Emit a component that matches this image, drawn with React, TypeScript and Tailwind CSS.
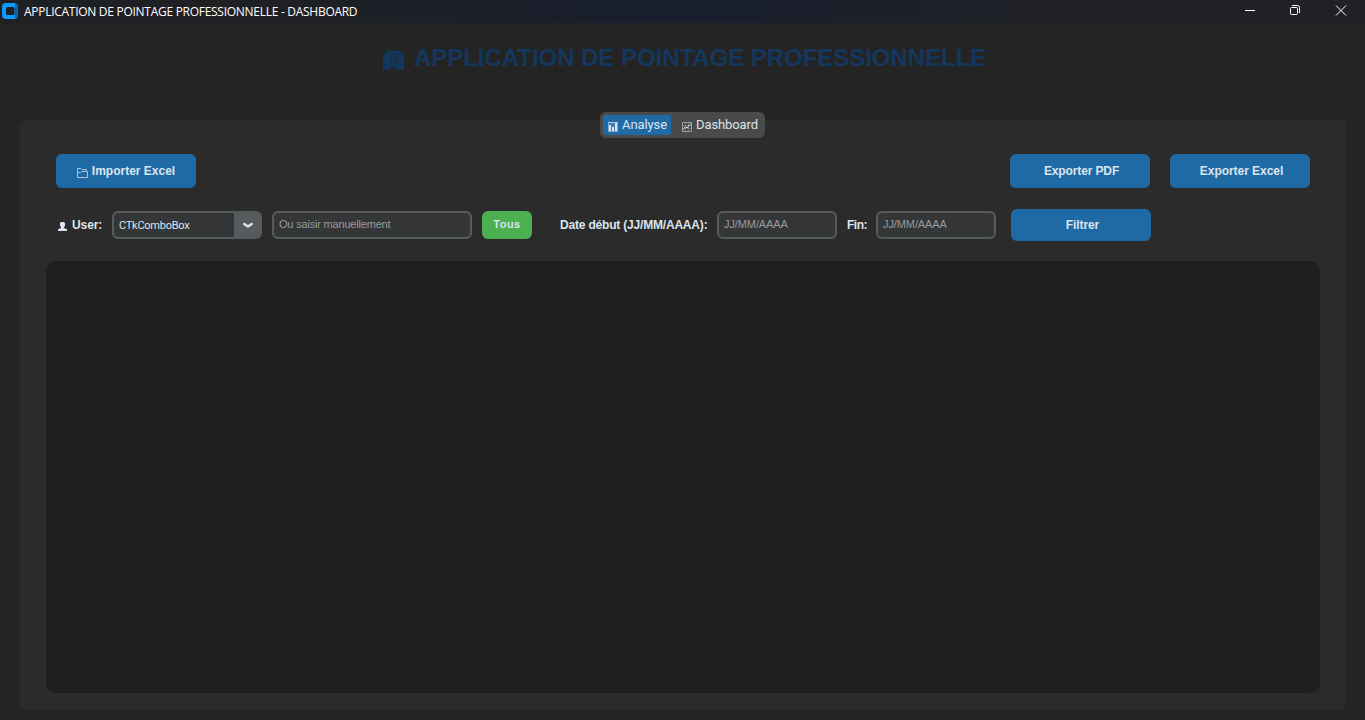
import type { ReactNode } from "react";

const BLUE_BUTTON =
  "flex w-[140px] shrink-0 items-center justify-center rounded-[6px] bg-[#1f6aa5] text-[12px] font-bold text-[#dce4ee]";
const FIELD =
  "flex h-7 shrink-0 rounded-[6px] border-2 border-[#565b5e] bg-[#343638] text-[11px]";

function Logo() {
  return (
    <svg className="ml-0.5 size-4 shrink-0" viewBox="0 0 16 16">
      <rect width="16" height="16" rx="4" fill="#0a9aff" />
      <path d="M13 .200a4 4 0 0 1 3 3.800v8a4 4 0 0 1-3 3.800z" fill="#0a63b0" />
      <rect x="4" y="4" width="8.500" height="8" rx="1.500" fill="#202126" />
    </svg>
  );
}

function BuildingIcon() {
  return (
    <svg className="mt-1 mr-2.5 h-5 w-[21px] shrink-0" viewBox="0 0 21 20">
      <path d="M0 4.500L1 3.500h2V2L5 .5h11L18 2v1.500h2l1 1v15h-8V16H8v3.500H0z" fill="#14375e" />
      <path
        d="M7 3h2v1.500H7zM10 3h1.500v1.500H10zM13 3h1.500v1.500H13zM7 6h2v1.500H7zM10 6h1.500v1.500H10zM13 6h1.500v1.500H13zM7 9h2v1.500H7zM10 9h1.500v1.500H10zM13 9h1.500v1.500H13zM7 12h2v1.500H7zM10 12h1.500v1.500H10zM13 12h1.500v1.500H13z"
        fill="#242424"
        fillOpacity=".85"
      />
      <path d="M2.500 6v12M18.500 6v12" stroke="#242424" strokeOpacity=".5" strokeDasharray="1 2" />
    </svg>
  );
}

function BarChartIcon() {
  return (
    <svg className="mt-1 mr-1 size-2.5 shrink-0" viewBox="0 0 10 10">
      <path d="M0 0h10v10H0z" fill="#7fa9cd" />
      <path d="M1 1h8v8H1z" fill="#3f7fb4" />
      <path d="M1 3h2v6H1zM4 5h2v4H4zM7 1h2v8H7z" fill="#dce4ee" />
      <path d="M0 0h10v1H0z" fill="#b4cce0" />
    </svg>
  );
}

function TrendIcon() {
  return (
    <svg className="mt-1 mr-1 size-2.5 shrink-0" viewBox="0 0 10 10" fill="none">
      <path d="M3.500.500v9M6.500.500v9M.5 3.500h9M.5 6.500h9" stroke="#a1a6ac" strokeOpacity=".35" />
      <path d="M.5.500h9v9h-9z" stroke="#9a9fa5" />
      <path d="M1 7.500l2.500-3L5 6l4-4.500" stroke="#dce4ee" />
    </svg>
  );
}

function FolderIcon() {
  return (
    <svg className="mt-[3px] mr-1 h-2.5 w-[11px] shrink-0" viewBox="0 0 11 10" fill="none">
      <path d="M.5 9.500V.500H4L5 1.500h4.500v2M.5 9.500h10v-6H4.500l-1 1h-3" stroke="#a9c5de" />
    </svg>
  );
}

function UserIcon() {
  return (
    <svg className="mt-[3px] mr-[5px] h-[9px] w-[9px] shrink-0" viewBox="0 0 9 9" fill="#dce4ee">
      <path d="M2 1l1-1h3l1 1v3L6 5v1l2 .7 1 .8V9H0V7.500l1-.8L3 6V5L2 4z" />
    </svg>
  );
}

function Placeholder({ width, children }: { width: string; children: ReactNode }) {
  return (
    <div className={`${FIELD} ${width} pt-[3px] pl-[5px] text-[#9a9b9c]`}>
      <span className="leading-4">{children}</span>
    </div>
  );
}

export default function App() {
  return (
    <div className="flex h-[720px] w-[1365px] flex-col overflow-hidden bg-[#242424] font-['Liberation_Sans',sans-serif] whitespace-nowrap">
      <header className="flex h-[23px] shrink-0 items-start bg-linear-to-r from-[#1f2024] from-20% via-[#181e2e] via-50% to-[#202125] to-80% pt-[3px] text-white">
        <Logo />
        <span className="ml-1.5 font-['Open_Sans','Noto_Sans',sans-serif] text-[12px] leading-[17px] tracking-[-0.28px]">
          APPLICATION DE POINTAGE PROFESSIONNELLE - DASHBOARD
        </span>
        <svg className="ml-auto h-4 w-[121px] shrink-0" viewBox="0 0 121 16" fill="none" stroke="#fff">
          <path d="M1 7.500h10" />
          <rect x="46.500" y="4.500" width="7" height="7" rx="1" />
          <path d="M48 2.500h5.500a2 2 0 0 1 2 2V10" />
          <path d="M92 2.500l10 10M102 2.500l-10 10" />
        </svg>
      </header>

      <h1 className="ml-[383px] flex h-[70px] shrink-0 items-center text-[24px] font-bold text-[#14375e]">
        <BuildingIcon />
        <span className="tracking-[-0.04px]">APPLICATION DE POINTAGE PROFESSIONNELLE</span>
      </h1>

      <main className="mx-5 mt-[27px] mr-[19px] flex h-[590px] shrink-0 flex-col rounded-[6px] bg-[#2b2b2b]">
        <nav className="-mt-2 ml-[580px] flex h-[26px] w-[165px] shrink-0 rounded-[6px] bg-[#4a4a4a] p-[3px] font-[Roboto,sans-serif] text-[13px] leading-5 tracking-[-0.1px] text-[#dce4ee]">
          <div className="flex w-[68px] items-center rounded-[3px] bg-[#1f6aa5] pl-[5px]">
            <BarChartIcon />
            <span>Analyse</span>
          </div>
          <div className="flex items-center pl-[11px]">
            <TrendIcon />
            <span>Dashboard</span>
          </div>
        </nav>

        <div className="mt-4 mr-9 ml-9 flex h-[34px] shrink-0 gap-5">
          <button className={`${BLUE_BUTTON} mr-auto`}>
            <FolderIcon />
            <span>Importer Excel</span>
          </button>
          <button className={`${BLUE_BUTTON} pl-[3px] tracking-[-0.12px]`}>Exporter PDF</button>
          <button className={`${BLUE_BUTTON} pl-[3px] tracking-[-0.05px]`}>Exporter Excel</button>
        </div>

        <div className="mt-[21px] ml-[38px] flex h-8 shrink-0 items-center text-[12px] font-bold text-[#dce4ee]">
          <UserIcon />
          <span className="w-10 tracking-[-0.1px]">User:</span>
          <div className={`${FIELD} w-[150px] overflow-hidden font-normal`}>
            <span className="grow pt-px pl-[5px] font-[Roboto,sans-serif] leading-6 tracking-[-0.25px]">CTkComboBox</span>
            <span className="flex w-[26px] items-center justify-center bg-[#565b5e] pl-0.5">
              <svg className="size-2.5" viewBox="0 0 10 10" fill="none">
                <path d="M1.300 4L5 6.500 8.700 4" stroke="#dce4ee" strokeWidth="2.300" strokeLinecap="round" strokeLinejoin="round" />
              </svg>
            </span>
          </div>
          <div className="ml-2.5 font-normal tracking-[-0.19px]">
            <Placeholder width="w-[200px]">Ou saisir manuellement</Placeholder>
          </div>
          <button className="ml-2.5 h-7 w-[50px] rounded-[6px] bg-[#4caf50] pb-0.5 text-[11px] tracking-[0.5px]">Tous</button>
          <span className="ml-7 w-[157px] tracking-[-0.19px]">Date début (JJ/MM/AAAA):</span>
          <div className="font-normal tracking-[-0.1px]">
            <Placeholder width="w-[120px]">JJ/MM/AAAA</Placeholder>
          </div>
          <span className="ml-2.5 w-[29px] tracking-[-0.5px]">Fin:</span>
          <div className="font-normal tracking-[-0.1px]">
            <Placeholder width="w-[120px]">JJ/MM/AAAA</Placeholder>
          </div>
          <button className={`${BLUE_BUTTON} ml-[15px] h-8 pl-[3px] tracking-[-0.1px]`}>Filtrer</button>
        </div>

        <section className="mt-5 ml-[26px] h-[432px] w-[1274px] shrink-0 rounded-[10px] bg-[#1e201f]" />
      </main>
    </div>
  );
}
